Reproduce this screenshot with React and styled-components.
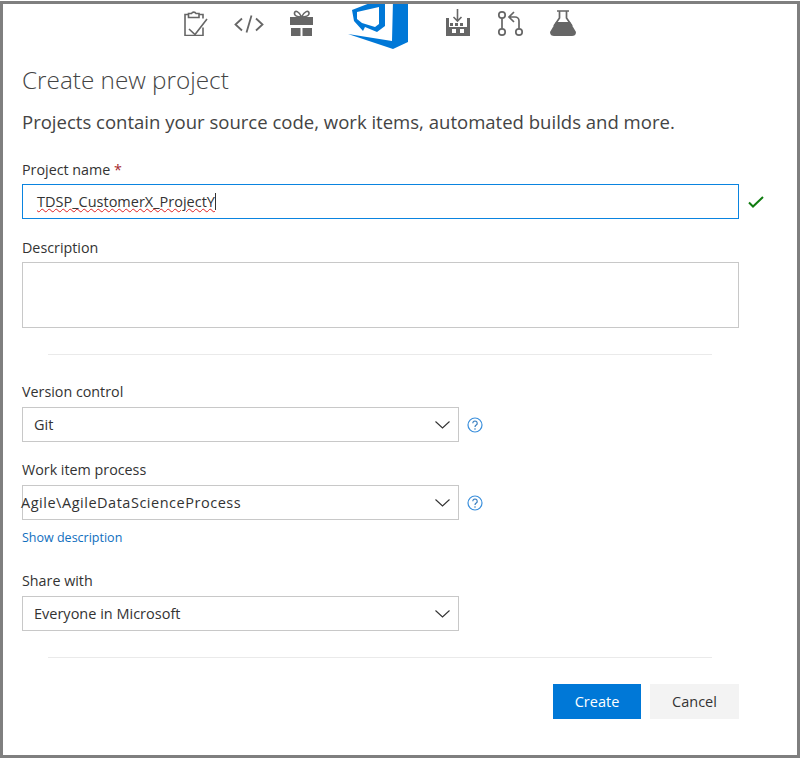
import React from "react";
import styled, { createGlobalStyle } from "styled-components";

const GlobalStyle = createGlobalStyle`
  html, body { margin: 0; padding: 0; background: #fff; }
  body { font-family: "Open Sans", "Noto Sans", sans-serif; color: #333; }
`;

const Frame = styled.div`
  box-sizing: border-box;
  width: 800px;
  height: 757px;
  margin-top: 1px;
  border: 3px solid #7f7f7f;
  padding: 0 58px 0 19px;
  overflow: hidden;
`;

const IconBar = styled.div`
  display: flex;
  align-items: flex-start;
  height: 46px;
  margin-left: 162px;
`;

const Glyph = styled.svg`
  display: block;
  flex: none;
  margin-top: ${(p) => p.$top || 0}px;
  margin-left: ${(p) => p.$left || 0}px;
  margin-right: ${(p) => p.$gap || 0}px;
`;

const Title = styled.h1`
  margin: 14px 0 0;
  font-size: 24.3px;
  line-height: 32px;
  font-weight: 300;
  color: #444;
`;

const Subtitle = styled.p`
  margin: 13px 0 0;
  font-size: 18.55px;
  line-height: 26px;
  color: #444;
`;

const Field = styled.div`
  margin-top: ${(p) => p.$top}px;
`;

const Label = styled.div`
  font-size: 14.3px;
  line-height: 20px;
  color: #333;
  margin-bottom: ${(p) => p.$gap || 4}px;
`;

const Star = styled.span`
  color: #a4262c;
`;

const Row = styled.div`
  display: flex;
  align-items: center;
`;

const NameBox = styled.div`
  box-sizing: border-box;
  flex: none;
  width: 717px;
  height: 35px;
  border: 1px solid #0a84e0;
  padding-left: 14px;
  display: flex;
  align-items: center;
  font-size: 14.5px;
  color: #333;
`;

const Squiggle = styled.span`
  text-decoration: underline wavy #e02020 1px;
  text-underline-offset: 1px;
`;

const Caret = styled.span`
  display: inline-block;
  width: 1px;
  height: 17px;
  background: #333;
`;

const TextArea = styled.div`
  box-sizing: border-box;
  width: 717px;
  height: 66px;
  border: 1px solid #c8c8c8;
`;

const Divider = styled.hr`
  width: 664px;
  height: 1px;
  border: 0;
  background: #eaeaea;
  margin: ${(p) => p.$top}px 0 0 26px;
`;

const Select = styled.div`
  box-sizing: border-box;
  flex: none;
  width: 437px;
  height: 35px;
  border: 1px solid #c8c8c8;
  display: flex;
  align-items: center;
  justify-content: space-between;
  padding: 0 8px 0 11px;
  font-size: 14.5px;
  color: #333;
`;

// this value sits left of the box edge in the original, and runs wider
const PathValue = styled.span`
  margin-left: -13px;
  letter-spacing: 0.52px;
`;

const Help = styled.svg`
  display: block;
  margin-left: 8px;
`;

const Link = styled.a`
  display: block;
  margin-top: 9px;
  font-size: 12.5px;
  line-height: 17px;
  color: #106ebe;
`;

const Actions = styled.div`
  display: flex;
  gap: 9px;
  width: 717px;
  justify-content: flex-end;
  margin-top: 26px;
`;

const Button = styled.button`
  width: ${(p) => p.$w}px;
  height: 35px;
  border: 0;
  padding: 0;
  font-family: inherit;
  font-size: 14.5px;
  background: ${(p) => (p.$primary ? "#0078d7" : "#f3f3f3")};
  color: ${(p) => (p.$primary ? "#fff" : "#333")};
`;

const HelpIcon = () => (
  <Help width="16" height="16" viewBox="0 0 16 16">
    <circle cx="8" cy="8" r="7" fill="none" stroke="#3a8fdc" strokeWidth="1.2" />
    <path d="M5.800 6.200a2.200 2.200 0 1 1 3.400 1.900c-.8.5-1.200.9-1.200 1.900" fill="none" stroke="#3a7fc0" strokeWidth="1.200" />
    <circle cx="8" cy="12" r=".8" fill="#3a7fc0" />
  </Help>
);

const Chevron = () => (
  <svg width="15" height="8" viewBox="0 0 15 8" fill="none" stroke="#333" strokeWidth="1.1">
    <path d="M.5.5l7 6.500 7-6.500" />
  </svg>
);

const Icons = () => (
  <IconBar>
    <Glyph width="24" height="26" viewBox="0 0 24 26" $gap={26} $top={6} fill="none" stroke="#666" strokeWidth="1.600">
      <path d="M4.500 4.500H1v21h18v-8M15 4.500h4v4" />
      <path d="M4.500 7.500v-4h3a2.500 2.500 0 0 1 4.500 0h3v4z" />
      <path d="M5 19l6 5.500L23 9" />
    </Glyph>
    <Glyph width="30" height="18" viewBox="0 0 30 18" $gap={26} $top={11} fill="none" stroke="#666" strokeWidth="1.800">
      <path d="M8 3.500L1.500 9.500 8 15.500M22 3.500l6.500 6L22 15.500M17.500.5l-5 17" />
    </Glyph>
    <Glyph width="24" height="26" viewBox="0 0 24 26" $gap={31} $top={6} fill="#666">
      <rect x="0" y="7" width="23" height="8" />
      <rect x="1" y="18" width="9.500" height="8" />
      <rect x="12.500" y="18" width="9.500" height="8" />
      <path d="M11.500 7C9 1 5 0 4.500 3S8 7 11.500 7zM11.500 7c3-6 7-7 7.500-4s-4 4-7.500 4z" fill="none" stroke="#666" strokeWidth="1.600" />
    </Glyph>
    <Glyph width="66" height="46" viewBox="345 4 66 46" $gap={35}>
      <path fill="#0078d7" d="M393 0h15v42l-15 7-45-15 44 7z" />
      <path fill="#0078d7" fillRule="evenodd" d="M385 0v26l-8 6-12-5-2 4-9-10-2-11 18-7zM357 12v7l5 4 13 4 4-3V7z" />
    </Glyph>
    <Glyph width="24" height="27" viewBox="0 0 24 27" $gap={26} $top={5} fill="#666">
      <path d="M11.500 0v12M7.500 8l4 4 4-4" fill="none" stroke="#666" strokeWidth="1.600" />
      <path d="M0 9h3v9h18V9h3v18H0z" />
      <rect x="4" y="14" width="3" height="3" />
      <rect x="9" y="14" width="3" height="3" />
      <rect x="14" y="14" width="3" height="3" />
      <rect x="6" y="20" width="4" height="4" fill="#fff" />
      <rect x="14" y="20" width="4" height="4" fill="#fff" />
    </Glyph>
    <Glyph width="28" height="28" viewBox="0 0 28 28" $gap={26} $top={5} fill="none" stroke="#666" strokeWidth="1.700">
      <circle cx="6" cy="6" r="3.200" />
      <circle cx="6" cy="23" r="3.200" />
      <circle cx="23" cy="23" r="3.200" />
      <path d="M6 9.500v10M23 19.500V12a4 4 0 0 0-4-4h-5M18 3l-5 5 5 5" />
    </Glyph>
    <Glyph width="26" height="26" viewBox="0 0 26 26" $top={6} fill="#666">
      <path d="M7 1h12M9.500 1v7L4 16M16.500 1v7l5.500 8" fill="none" stroke="#666" strokeWidth="1.700" />
      <path d="M6 12h14l6 10c0 3-2 4-4 4H4c-2 0-4-1-4-4z" />
    </Glyph>
  </IconBar>
);

export default function App() {
  return (
    <>
      <GlobalStyle />
      <Frame>
        <Icons />
        <Title>Create new project</Title>
        <Subtitle>Projects contain your source code, work items, automated builds and more.</Subtitle>

        <Field $top={25}>
          <Label>Project name <Star>*</Star></Label>
          <Row>
            <NameBox>
              <Squiggle>TDSP_CustomerX_ProjectY</Squiggle>
              <Caret />
            </NameBox>
            <Glyph width="16" height="12" viewBox="0 0 16 12" $left={9} fill="none" stroke="#107c10" strokeWidth="2">
              <path d="M1 6.500l4 4L15 1" />
            </Glyph>
          </Row>
        </Field>

        <Field $top={19}>
          <Label>Description</Label>
          <TextArea />
        </Field>

        <Divider $top={26} />

        <Field $top={27}>
          <Label $gap={5}>Version control</Label>
          <Row>
            <Select>Git<Chevron /></Select>
            <HelpIcon />
          </Row>
        </Field>

        <Field $top={18}>
          <Label $gap={5}>Work item process</Label>
          <Row>
            <Select><PathValue>Agile\AgileDataScienceProcess</PathValue><Chevron /></Select>
            <HelpIcon />
          </Row>
          <Link>Show description</Link>
        </Field>

        <Field $top={25}>
          <Label $gap={5}>Share with</Label>
          <Select>Everyone in Microsoft<Chevron /></Select>
        </Field>

        <Divider $top={26} />

        <Actions>
          <Button $primary $w={88}>Create</Button>
          <Button $w={89}>Cancel</Button>
        </Actions>
      </Frame>
    </>
  );
}
